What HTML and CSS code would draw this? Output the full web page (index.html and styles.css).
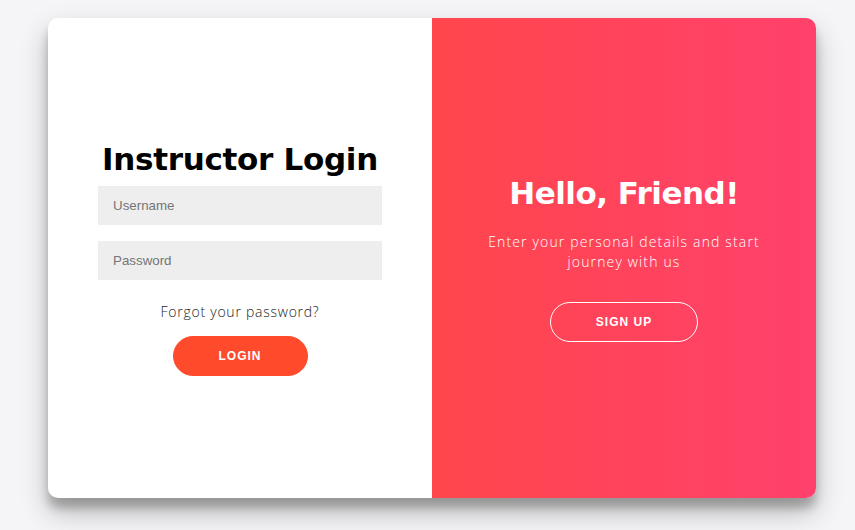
FILE: index.html
```html
<!DOCTYPE html>
<html>
<head>
<meta charset="utf-8">
<link rel="stylesheet" href="styles.css">
</head>
<body>
<div class="container">
  <div class="form-side">
    <form class="form" onsubmit="return false">
      <h1 class="title">Instructor Login</h1>
      <input class="field" type="text" placeholder="Username">
      <input class="field" type="password" placeholder="Password">
      <a class="forgot" href="#">Forgot your password?</a>
      <button class="btn btn-solid" type="button">Login</button>
    </form>
  </div>
  <div class="overlay-side">
    <h1 class="title title-light">Hello, Friend!</h1>
    <p class="lead">Enter your personal details and start journey with us</p>
    <button class="btn btn-ghost" type="button">Sign Up</button>
  </div>
</div>
</body>
</html>
```

FILE: styles.css
```css
* { box-sizing: border-box; }

html, body {
  margin: 0;
  padding: 0;
}

body {
  background: #f5f5f7;
  font-family: "Open Sans", "DejaVu Sans", sans-serif;
  padding: 18px 0 32px 48px;
}

.container {
  width: 768px;
  height: 480px;
  background: #fff;
  border-radius: 10px;
  overflow: hidden;
  display: flex;
  box-shadow: 0 14px 28px rgba(0,0,0,0.25), 0 10px 10px rgba(0,0,0,0.22);
}

.form-side {
  width: 384px;
  height: 100%;
  padding: 0 50px 1px;
  display: flex;
  flex-direction: column;
  justify-content: center;
}

.form {
  display: flex;
  flex-direction: column;
  align-items: center;
  text-align: center;
}

.title {
  margin: 0;
  font-family: "DejaVu Sans", sans-serif;
  font-weight: bold;
  font-size: 31px;
  line-height: 38px;
  color: #000;
  letter-spacing: -0.3px;
}

.title-light {
  color: #fff;
  letter-spacing: -0.5px;
}

.field {
  width: 100%;
  height: 39px;
  margin: 8px 0;
  padding: 12px 15px;
  border: none;
  outline: none;
  background: #eee;
  font-family: "Liberation Sans", Arial, sans-serif;
  font-size: 13.33px;
  color: #333;
}

.field::placeholder {
  color: #757575;
}

.forgot {
  margin: 15px 0 16px;
  font-size: 14px;
  line-height: 17px;
  font-weight: 300;
  letter-spacing: 0.75px;
  color: #222;
  text-decoration: none;
}

.btn {
  border-radius: 20px;
  height: 40px;
  padding: 0 45px;
  font-family: "Liberation Sans", Arial, sans-serif;
  font-size: 12px;
  font-weight: bold;
  letter-spacing: 1px;
  text-transform: uppercase;
  color: #fff;
  cursor: pointer;
}

.btn-solid {
  background: #ff4b2b;
  border: 1px solid #ff4b2b;
}

.btn-ghost {
  background: transparent;
  border: 1px solid #fff;
}

.overlay-side {
  width: 384px;
  height: 100%;
  padding: 0 40px;
  display: flex;
  flex-direction: column;
  align-items: center;
  justify-content: center;
  text-align: center;
  color: #fff;
  background: linear-gradient(to right, #ff464c, #ff416c);
}

.lead {
  margin: 20px 0 30px;
  font-size: 14px;
  font-weight: 300;
  line-height: 20px;
  letter-spacing: 1.15px;
}
```
